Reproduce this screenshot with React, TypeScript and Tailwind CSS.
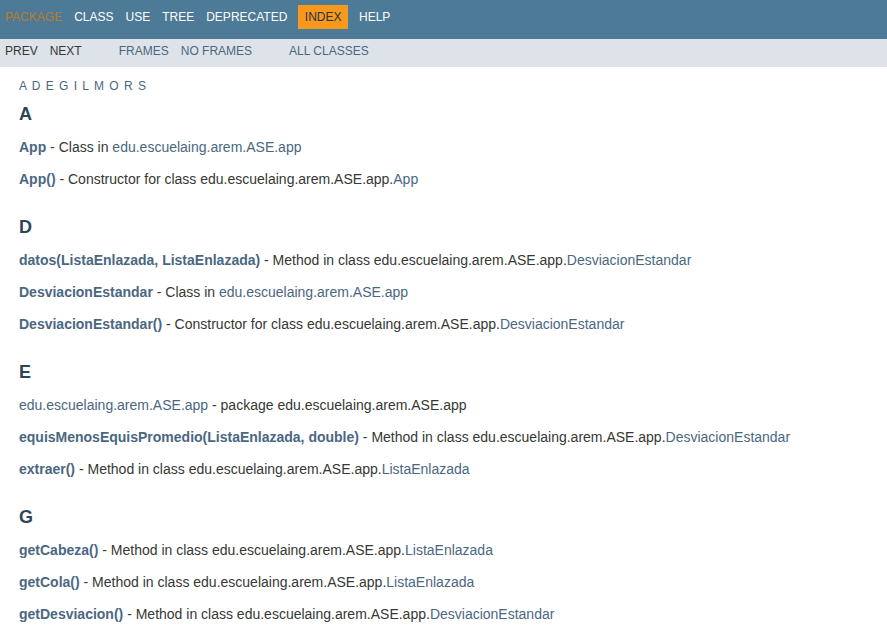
type Seg = { t: string; k: 'b' | 'l' | 't' };

const PKG = 'edu.escuelaing.arem.ASE.app';

const groups: { letter: string; items: Seg[][] }[] = [
  {
    letter: 'A',
    items: [
      [{ t: 'App', k: 'b' }, { t: ' - Class in ', k: 't' }, { t: PKG, k: 'l' }],
      [{ t: 'App()', k: 'b' }, { t: ` - Constructor for class ${PKG}.`, k: 't' }, { t: 'App', k: 'l' }],
    ],
  },
  {
    letter: 'D',
    items: [
      [
        { t: 'datos(ListaEnlazada, ListaEnlazada)', k: 'b' },
        { t: ` - Method in class ${PKG}.`, k: 't' },
        { t: 'DesviacionEstandar', k: 'l' },
      ],
      [{ t: 'DesviacionEstandar', k: 'b' }, { t: ' - Class in ', k: 't' }, { t: PKG, k: 'l' }],
      [
        { t: 'DesviacionEstandar()', k: 'b' },
        { t: ` - Constructor for class ${PKG}.`, k: 't' },
        { t: 'DesviacionEstandar', k: 'l' },
      ],
    ],
  },
  {
    letter: 'E',
    items: [
      [{ t: PKG, k: 'l' }, { t: ` - package ${PKG}`, k: 't' }],
      [
        { t: 'equisMenosEquisPromedio(ListaEnlazada, double)', k: 'b' },
        { t: ` - Method in class ${PKG}.`, k: 't' },
        { t: 'DesviacionEstandar', k: 'l' },
      ],
      [{ t: 'extraer()', k: 'b' }, { t: ` - Method in class ${PKG}.`, k: 't' }, { t: 'ListaEnlazada', k: 'l' }],
    ],
  },
  {
    letter: 'G',
    items: [
      [{ t: 'getCabeza()', k: 'b' }, { t: ` - Method in class ${PKG}.`, k: 't' }, { t: 'ListaEnlazada', k: 'l' }],
      [{ t: 'getCola()', k: 'b' }, { t: ` - Method in class ${PKG}.`, k: 't' }, { t: 'ListaEnlazada', k: 'l' }],
      [
        { t: 'getDesviacion()', k: 'b' },
        { t: ` - Method in class ${PKG}.`, k: 't' },
        { t: 'DesviacionEstandar', k: 'l' },
      ],
    ],
  },
];

export default function App() {
  return (
    <div className="h-[642px] overflow-hidden bg-white font-['Liberation_Sans',Arial,sans-serif] text-[#353833]">
      {/* Top nav */}
      <div className="h-[39px] bg-[#4d7a97] pt-[5px]">
        <ul className="flex -ml-px text-[12px] leading-[14px]">
          <li className="px-[6px] py-[5px] text-[#bb7a2a]">PACKAGE</li>
          <li className="px-[6px] py-[5px] text-white">CLASS</li>
          <li className="px-[6px] py-[5px] text-white">USE</li>
          <li className="px-[6px] py-[5px] text-white">TREE</li>
          <li className="pl-[6px] pr-[11px] py-[5px] text-white">DEPRECATED</li>
          <li className="px-[6.5px] py-[5px] bg-[#f8981d] text-[#253441]">INDEX</li>
          <li className="pl-[11px] pr-[6px] py-[5px] text-white">HELP</li>
        </ul>
      </div>
      {/* Sub nav */}
      <div className="h-[28px] bg-[#dee3e9] flex items-start pt-[6px] text-[12px] leading-[13px]">
        <ul className="flex -ml-px text-[#353833]">
          <li className="px-[6px]">PREV</li>
          <li className="px-[6px]">NEXT</li>
        </ul>
        <ul className="flex ml-[25px] text-[#4a6782]">
          <li className="px-[6px]">FRAMES</li>
          <li className="px-[6px]">NO FRAMES</li>
        </ul>
        <ul className="flex ml-[25px] text-[#4a6782]">
          <li className="px-[6px]">ALL CLASSES</li>
        </ul>
      </div>
      {/* Content */}
      <div className="px-[19px]">
        <div className="mt-[10px] h-[18px] leading-[18px] text-[12px] tracking-[1px] text-[#4a6782]">
          A D E G I L M O R S
        </div>
        <div className="mt-[8px] flex flex-col gap-[21px]">
          {groups.map((g) => (
            <div key={g.letter} className="flex flex-col">
              <h2 className="h-[22px] leading-[22px] text-[18px] font-bold text-[#2c4557]">{g.letter}</h2>
              <dl className="mt-[6px]">
                {g.items.map((segs, i) => (
                  <dt key={i} className="h-[32px] leading-[32px] text-[14px] whitespace-nowrap">
                    {segs.map((s, j) =>
                      s.k === 'b' ? (
                        <span key={j} className="font-bold text-[#4a6782]">{s.t}</span>
                      ) : s.k === 'l' ? (
                        <span key={j} className="text-[#4a6782]">{s.t}</span>
                      ) : (
                        <span key={j}>{s.t}</span>
                      )
                    )}
                  </dt>
                ))}
              </dl>
            </div>
          ))}
        </div>
      </div>
    </div>
  );
}
